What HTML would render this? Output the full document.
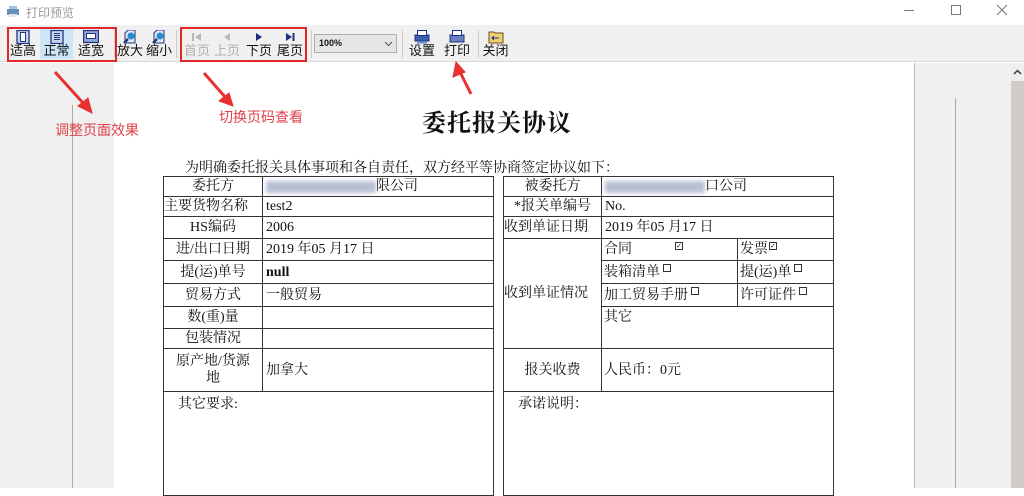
<!DOCTYPE html>
<html><head><meta charset="utf-8">
<style>
*{margin:0;padding:0;box-sizing:border-box}
body{width:1024px;height:488px;overflow:hidden;background:#fff;position:relative;font-family:"Liberation Serif","Noto Serif CJK SC",serif;color:#111}
.a{position:absolute}
.ui{font-family:"Liberation Sans","Noto Sans CJK SC",sans-serif}
.btn{position:absolute;top:28px;height:32px;text-align:center;font-size:13px;font-family:"Liberation Sans","Noto Sans CJK SC",sans-serif;color:#111}
.btn .t{position:absolute;left:-4px;right:-4px;top:16px;line-height:14px}
.btn .ic{position:absolute;left:50%;top:2px;margin-left:-8px;width:16px;height:14px}
.dis{color:#b0b0b0}
.c{position:absolute;border:1px solid #333;font-size:14px;line-height:17px;white-space:nowrap;display:flex;align-items:center}
.ctr{justify-content:center;text-align:center}
.blur{display:inline-block;height:12px;background:#9aa4c0;filter:blur(2px);vertical-align:middle;opacity:.7}
.cb{display:inline-block;width:8px;height:8px;border:1px solid #333;margin-left:3px;margin-bottom:8px;font-size:7px;line-height:6px;text-align:center;font-family:"DejaVu Sans",sans-serif}
</style></head><body>
<div class="a" style="left:0;top:0;width:1024px;height:25px;background:#fff"></div>
<svg class="a" style="left:6px;top:6px" width="14" height="12"><rect x="1" y="3" width="12" height="6" fill="#6a8fb8"/><rect x="3" y="0" width="8" height="3" fill="#a8c0dc"/><rect x="3" y="8" width="8" height="3" fill="#dfe8f2"/></svg>
<div class="a ui" style="left:26px;top:4px;font-size:12px;color:#999">打印预览</div>
<div class="a" style="left:904px;top:10px;width:10px;height:1px;background:#777"></div>
<div class="a" style="left:951px;top:5px;width:10px;height:10px;border:1px solid #777"></div>
<svg class="a" style="left:996px;top:4px" width="12" height="12"><path d="M1 1L11 11M11 1L1 11" stroke="#777" stroke-width="1"/></svg>
<div class="a" style="left:0;top:25px;width:1024px;height:37px;background:#f0f0f0;border-bottom:1px solid #d8d8d8"></div>
<div class="a" style="left:40px;top:28px;width:33px;height:31px;background:#cce6f8"></div>
<div class="btn" style="left:9px;width:28px"><svg class="ic" viewBox="0 0 16 14"><rect x="2" y="0.5" width="12" height="13" fill="#c8d6f0" stroke="#22357a" stroke-width="1.3"/><rect x="5.5" y="2.5" width="5" height="9" fill="#fff" stroke="#22357a"/></svg><div class="t">适高</div></div>
<div class="btn" style="left:41px;width:31px"><svg class="ic" viewBox="0 0 16 14"><rect x="2" y="0.5" width="12" height="13" fill="#c8d6f0" stroke="#22357a" stroke-width="1.3"/><path d="M5 3.5h6M5 5.5h6M5 7.5h6M5 9.5h6" stroke="#22357a"/></svg><div class="t">正常</div></div>
<div class="btn" style="left:76px;width:30px"><svg class="ic" viewBox="0 0 16 14"><rect x="0.5" y="0.5" width="15" height="12" fill="#8ea4dc" stroke="#22357a" stroke-width="1.3"/><rect x="3.5" y="3.5" width="9" height="5" fill="#fff" stroke="#22357a"/></svg><div class="t">适宽</div></div>
<div class="a" style="left:114px;top:30px;width:1px;height:28px;background:#ccc"></div>
<div class="btn" style="left:117px;width:26px"><svg class="ic" viewBox="0 0 16 14"><path d="M3 13V3l3-3h7v13z" fill="#dfe8f4" stroke="#22357a"/><circle cx="9" cy="6" r="3.5" fill="#2a8ad0"/><path d="M6 9L2 13" stroke="#22357a" stroke-width="2.5"/></svg><div class="t">放大</div></div>
<div class="btn" style="left:146px;width:26px"><svg class="ic" viewBox="0 0 16 14"><path d="M3 13V3l3-3h7v13z" fill="#dfe8f4" stroke="#22357a"/><circle cx="9" cy="6" r="3.5" fill="#2a8ad0"/><path d="M6 9L2 13" stroke="#22357a" stroke-width="2.5"/></svg><div class="t">缩小</div></div>
<div class="a" style="left:176px;top:30px;width:1px;height:28px;background:#ccc"></div>
<div class="btn dis" style="left:183px;width:28px"><svg class="ic" viewBox="0 0 16 14"><path d="M4 3v8" stroke="#b8b8b8" stroke-width="2"/><path d="M12 3v8L6 7z" fill="#b8b8b8"/></svg><div class="t">首页</div></div>
<div class="btn dis" style="left:213px;width:28px"><svg class="ic" viewBox="0 0 16 14"><path d="M11 3v8L5 7z" fill="#b8b8b8"/></svg><div class="t">上页</div></div>
<div class="btn" style="left:245px;width:28px"><svg class="ic" viewBox="0 0 16 14"><path d="M5 3v8l6-4z" fill="#1c2f80"/></svg><div class="t">下页</div></div>
<div class="btn" style="left:276px;width:28px"><svg class="ic" viewBox="0 0 16 14"><path d="M4 3v8l6-4z" fill="#1c2f80"/><path d="M11.5 3v8" stroke="#1c2f80" stroke-width="2"/></svg><div class="t">尾页</div></div>
<div class="a" style="left:311px;top:30px;width:1px;height:28px;background:#ccc"></div>
<div class="a ui" style="left:314px;top:34px;width:83px;height:19px;border:1px solid #adadad;background:#e6e6e6;font-size:9px;line-height:17px;padding-left:4px;font-weight:bold">100%</div>
<svg class="a" style="left:384px;top:41px" width="9" height="6"><path d="M1 1l3.5 3.5L8 1" stroke="#555" fill="none"/></svg>
<div class="a" style="left:402px;top:30px;width:1px;height:28px;background:#ccc"></div>
<div class="btn" style="left:408px;width:28px"><svg class="ic" viewBox="0 0 16 14"><rect x="1" y="5" width="14" height="6" fill="#3a60b0" stroke="#1c2f80"/><rect x="3.5" y="0.5" width="9" height="5" fill="#fff" stroke="#1c2f80"/><rect x="3" y="11" width="10" height="2.5" fill="#6a88c8"/></svg><div class="t">设置</div></div>
<div class="btn" style="left:443px;width:28px"><svg class="ic" viewBox="0 0 16 14"><rect x="1" y="5" width="14" height="7" fill="#6a80c0" stroke="#1c2f80"/><rect x="3.5" y="0.5" width="9" height="5" fill="#fff" stroke="#1c2f80"/></svg><div class="t">打印</div></div>
<div class="a" style="left:478px;top:30px;width:1px;height:28px;background:#ccc"></div>
<div class="btn" style="left:482px;width:27px"><svg class="ic" viewBox="0 0 16 14"><path d="M1 2h5l1 1h8v10H1z" fill="#f0d070" stroke="#665020"/><path d="M4 8h7M6 6l-2 2 2 2" stroke="#1c2f80" fill="none"/></svg><div class="t">关闭</div></div>
<div class="a" style="left:7px;top:27px;width:110px;height:35px;border:2px solid #e0282a"></div>
<div class="a" style="left:180px;top:27px;width:127px;height:35px;border:2px solid #e0282a"></div>
<div class="a" style="left:0;top:63px;width:114px;height:425px;background:#f0f0f0"></div>
<div class="a" style="left:72px;top:105px;width:1px;height:383px;background:#aaa"></div>
<div class="a" style="left:914px;top:63px;width:110px;height:425px;background:#f0f0f0;border-left:1px solid #bbb"></div>
<div class="a" style="left:955px;top:98px;width:1px;height:390px;background:#aaa"></div>
<div class="a" style="left:1011px;top:63px;width:13px;height:425px;background:#d0ccc8"></div>
<div class="a" style="left:1011px;top:63px;width:13px;height:18px;background:#eee"></div>
<svg class="a" style="left:1013px;top:69px" width="9" height="6"><path d="M1 5l3.5-3.5L8 5" stroke="#333" stroke-width="1.5" fill="none"/></svg>
<svg class="a" style="left:0;top:0" width="1024" height="488">
<g fill="#e83030" stroke="#e83030">
<path d="M55 72L84 104" stroke-width="3"/><path d="M92 113L78 106L88 98z"/>
<path d="M204 73L226 98" stroke-width="3"/><path d="M233 106L219 101L229 93z"/>
<path d="M471 94L460 72" stroke-width="3"/><path d="M456 62L453 77L465 72z"/>
</g></svg>
<div class="a ui" style="left:55px;top:120px;font-size:14px;color:#e0404a">调整页面效果</div>
<div class="a ui" style="left:219px;top:107px;font-size:14px;color:#e0404a">切换页码查看</div>
<div class="a" style="left:422px;top:103px;font-size:24px;font-weight:bold;letter-spacing:1px">委托报关协议</div>
<div class="a" style="left:185px;top:157px;font-size:14px">为明确委托报关具体事项和各自责任，双方经平等协商签定协议如下：</div>
<div class="a" style="left:163px;top:176px;width:331px;height:320px;border:1px solid #333"></div>
<div class="c ctr" style="left:163px;top:176px;width:100px;height:21px">委托方</div>
<div class="c" style="left:262px;top:176px;width:232px;height:21px;padding-left:3px"><span class="blur" style="width:110px"></span>限公司</div>
<div class="c" style="left:163px;top:196px;width:100px;height:21px">主要货物名称</div>
<div class="c" style="left:262px;top:196px;width:232px;height:21px;padding-left:3px">test2</div>
<div class="c ctr" style="left:163px;top:216px;width:100px;height:23px">HS编码</div>
<div class="c" style="left:262px;top:216px;width:232px;height:23px;padding-left:3px">2006</div>
<div class="c ctr" style="left:163px;top:238px;width:100px;height:23px">进/出口日期</div>
<div class="c" style="left:262px;top:238px;width:232px;height:23px;padding-left:3px">2019 年05 月17 日</div>
<div class="c ctr" style="left:163px;top:260px;width:100px;height:24px">提(运)单号</div>
<div class="c" style="left:262px;top:260px;width:232px;height:24px;padding-left:3px;font-weight:bold">null</div>
<div class="c ctr" style="left:163px;top:283px;width:100px;height:24px">贸易方式</div>
<div class="c" style="left:262px;top:283px;width:232px;height:24px;padding-left:3px">一般贸易</div>
<div class="c ctr" style="left:163px;top:306px;width:100px;height:23px">数(重)量</div>
<div class="c" style="left:262px;top:306px;width:232px;height:23px"></div>
<div class="c ctr" style="left:163px;top:328px;width:100px;height:21px">包装情况</div>
<div class="c" style="left:262px;top:328px;width:232px;height:21px"></div>
<div class="c ctr" style="left:163px;top:348px;width:100px;height:44px;white-space:normal">原产地/货源<br>地</div>
<div class="c" style="left:262px;top:348px;width:232px;height:44px;padding-left:3px">加拿大</div>
<div class="a" style="left:178px;top:393px;font-size:14px">其它要求:</div>
<div class="a" style="left:503px;top:176px;width:331px;height:320px;border:1px solid #333"></div>
<div class="c ctr" style="left:503px;top:176px;width:99px;height:21px">被委托方</div>
<div class="c" style="left:601px;top:176px;width:233px;height:21px;padding-left:3px"><span class="blur" style="width:100px"></span>口公司</div>
<div class="c ctr" style="left:503px;top:196px;width:99px;height:21px">*报关单编号</div>
<div class="c" style="left:601px;top:196px;width:233px;height:21px;padding-left:3px">No.</div>
<div class="c" style="left:503px;top:216px;width:99px;height:23px">收到单证日期</div>
<div class="c" style="left:601px;top:216px;width:233px;height:23px;padding-left:3px">2019 年05 月17 日</div>
<div class="c" style="left:503px;top:238px;width:99px;height:111px">收到单证情况</div>
<div class="c" style="left:601px;top:238px;width:137px;height:23px;padding-left:2px">合同<span style="display:inline-block;width:40px"></span><span class="cb">✓</span></div>
<div class="c" style="left:737px;top:238px;width:97px;height:23px;padding-left:2px">发票<span class="cb" style="margin-left:1px">✓</span></div>
<div class="c" style="left:601px;top:260px;width:137px;height:24px;padding-left:2px">装箱清单<span class="cb"></span></div>
<div class="c" style="left:737px;top:260px;width:97px;height:24px;padding-left:2px">提(运)单<span class="cb"></span></div>
<div class="c" style="left:601px;top:283px;width:137px;height:24px;padding-left:2px">加工贸易手册<span class="cb"></span></div>
<div class="c" style="left:737px;top:283px;width:97px;height:24px;padding-left:2px">许可证件<span class="cb"></span></div>
<div class="c" style="left:601px;top:306px;width:233px;height:43px;padding-left:2px;align-items:flex-start;padding-top:2px">其它</div>
<div class="c ctr" style="left:503px;top:348px;width:99px;height:44px">报关收费</div>
<div class="c" style="left:601px;top:348px;width:233px;height:44px;padding-left:2px">人民币：0元</div>
<div class="a" style="left:518px;top:393px;font-size:14px">承诺说明：</div>
</body></html>
